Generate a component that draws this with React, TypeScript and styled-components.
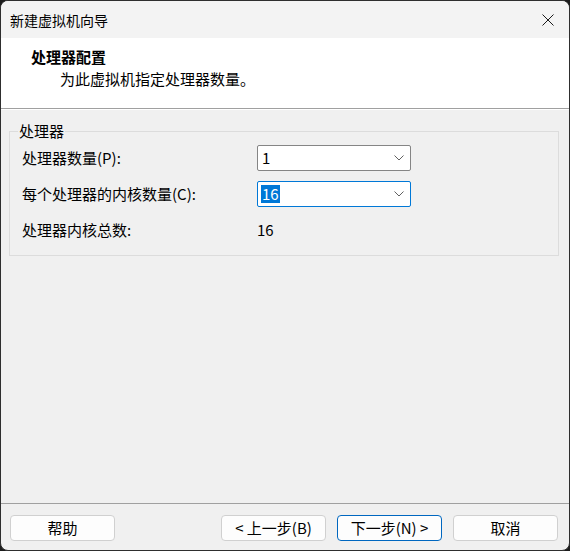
import React from "react";
import styled, { createGlobalStyle } from "styled-components";

const GlobalStyle = createGlobalStyle`
  html, body {
    margin: 0;
    padding: 0;
    background: #1c1c1c;
  }
  body {
    font-family: "Noto Sans CJK SC", "Noto Sans", sans-serif;
    -webkit-font-smoothing: antialiased;
  }
  * { box-sizing: border-box; }
`;

const Window = styled.div`
  width: 570px;
  height: 551px;
  border: 1px solid #2e2e2e;
  border-radius: 8px;
  overflow: hidden;
  display: flex;
  flex-direction: column;
  background: #f0f0f0;
  color: #000;
  font-size: 15px;
`;

const TitleBar = styled.div`
  height: 37px;
  flex: none;
  display: flex;
  align-items: center;
  justify-content: space-between;
  padding-left: 9px;
  background: #f3f3f3;
`;

const TitleText = styled.span`
  font-size: 14px;
  line-height: 20px;
`;

const CloseButton = styled.button`
  width: 42px;
  height: 37px;
  border: none;
  background: transparent;
  display: flex;
  align-items: center;
  justify-content: center;
  padding: 0;
  cursor: default;
`;

const Header = styled.div`
  flex: none;
  height: 71px;
  background: #ffffff;
  border-bottom: 1px solid #a0a0a0;
  display: flex;
  flex-direction: column;
  padding: 9px 0 0 30px;
  gap: 2px;
`;

const HeaderTitle = styled.div`
  font-weight: bold;
  font-size: 15px;
  line-height: 20px;
`;

const HeaderSub = styled.div`
  font-size: 15px;
  line-height: 20px;
  padding-left: 29px;
`;

const Content = styled.div`
  flex: 1;
  padding: 11px 10px 0 8px;
  border-top: 1px solid #ffffff;
`;

const GroupBox = styled.fieldset`
  margin: 0;
  border: 1px solid #dcdcdc;
  border-radius: 0;
  padding: 4px 12px 12px 12px;
  display: grid;
  grid-template-columns: 235px 154px;
  grid-auto-rows: 26px;
  row-gap: 10px;
  align-items: center;
`;

const Legend = styled.legend`
  margin-left: -4px;
  padding: 0 1px;
  font-size: 15px;
  line-height: 20px;
`;

const Label = styled.span`
  font-size: 15px;
  line-height: 20px;
`;

const Value = styled.span`
  font-size: 15px;
  line-height: 20px;
`;

const Combo = styled.div<{ $focused?: boolean }>`
  height: 26px;
  background: #ffffff;
  border: 1px solid ${(p) => (p.$focused ? "#0078d7" : "#858585")};
  border-radius: 2px;
  display: flex;
  align-items: center;
  justify-content: space-between;
  padding: 0 6px 0 3px;
`;

const ComboText = styled.span<{ $selected?: boolean }>`
  font-size: 15px;
  line-height: 18px;
  padding: 0 1px;
  background: ${(p) => (p.$selected ? "#0078d7" : "transparent")};
  color: ${(p) => (p.$selected ? "#ffffff" : "#000000")};
`;

const Footer = styled.div`
  flex: none;
  border-top: 1px solid #a0a0a0;
  display: flex;
  align-items: center;
  padding: 11px 11px 9px 9px;
  gap: 11px;
`;

const Spacer = styled.div`
  flex: 1;
`;

const Button = styled.button<{ $primary?: boolean }>`
  width: 105px;
  height: 26px;
  flex: none;
  background: #fdfdfd;
  border: 1px solid ${(p) => (p.$primary ? "#0067c0" : "#d0d0d0")};
  border-radius: 4px;
  font-family: "Noto Sans CJK SC", "Noto Sans", sans-serif;
  font-size: 15px;
  line-height: 20px;
  color: #000;
  padding: 0;
  display: flex;
  align-items: center;
  justify-content: center;
  cursor: default;
`;

const Chevron = () => (
  <svg width="10" height="6" viewBox="0 0 10 6">
    <path d="M0.5 0.5 L5 5 L9.5 0.5" fill="none" stroke="#606060" strokeWidth="1" />
  </svg>
);

const CloseIcon = () => (
  <svg width="12" height="12" viewBox="0 0 12 12">
    <path d="M0.5 0.5 L11.5 11.5 M11.5 0.5 L0.5 11.5" fill="none" stroke="#1a1a1a" strokeWidth="1" />
  </svg>
);

export default function App() {
  return (
    <>
      <GlobalStyle />
      <Window>
        <TitleBar>
          <TitleText>新建虚拟机向导</TitleText>
          <CloseButton aria-label="关闭">
            <CloseIcon />
          </CloseButton>
        </TitleBar>
        <Header>
          <HeaderTitle>处理器配置</HeaderTitle>
          <HeaderSub>为此虚拟机指定处理器数量。</HeaderSub>
        </Header>
        <Content>
          <GroupBox>
            <Legend>处理器</Legend>
            <Label>处理器数量(P):</Label>
            <Combo>
              <ComboText>1</ComboText>
              <Chevron />
            </Combo>
            <Label>每个处理器的内核数量(C):</Label>
            <Combo $focused>
              <ComboText $selected>16</ComboText>
              <Chevron />
            </Combo>
            <Label>处理器内核总数:</Label>
            <Value>16</Value>
          </GroupBox>
        </Content>
        <Footer>
          <Button>帮助</Button>
          <Spacer />
          <Button>&lt; 上一步(B)</Button>
          <Button $primary>下一步(N) &gt;</Button>
          <Button>取消</Button>
        </Footer>
      </Window>
    </>
  );
}
